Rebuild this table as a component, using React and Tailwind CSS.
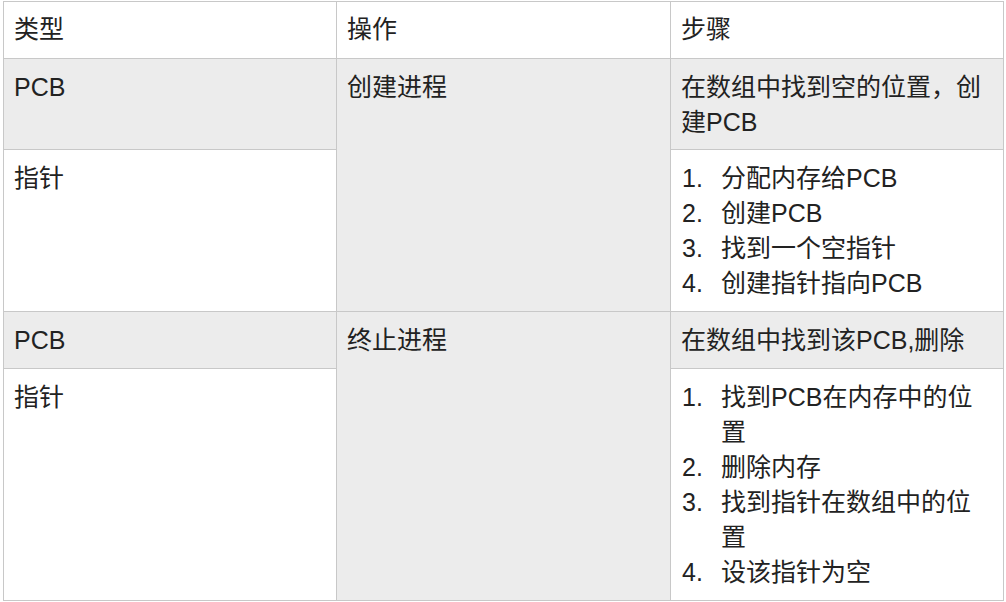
export default function App() {
  const font = { fontFamily: '"Liberation Sans", "Noto Sans CJK SC", sans-serif' };
  const cell = "px-[10px] pt-[10px] text-[25px] leading-[35px] text-[#222]";
  const Item = ({ n, children }) => (
    <div className="flex">
      <span className="w-[40px] shrink-0 pl-[1px]">{n}.</span>
      <span>{children}</span>
    </div>
  );
  return (
    <div className="w-[1006px] h-[602px] bg-white pt-[1px] pl-[3px]" style={font}>
      <div className="grid grid-cols-[332px_333px_332px] grid-rows-[56px_90px_161px_56px_231px] gap-px p-px bg-[#c8c8c8] w-[1001px]">
        <div className={`${cell} bg-white`}>类型</div>
        <div className={`${cell} bg-white`}>操作</div>
        <div className={`${cell} bg-white`}>步骤</div>

        <div className={`${cell} bg-[#ececec] pt-[11px]`}>PCB</div>
        <div className={`${cell} bg-[#ececec] pt-[11px] row-span-2`}>创建进程</div>
        <div className={`${cell} bg-[#ececec] pt-[11px]`}>
          在数组中找到空的位置，创<br />建PCB
        </div>

        <div className={`${cell} bg-white pt-[11px]`}>指针</div>
        <div className={`${cell} bg-white pt-[11px]`}>
          <Item n="1">分配内存给PCB</Item>
          <Item n="2">创建PCB</Item>
          <Item n="3">找到一个空指针</Item>
          <Item n="4">创建指针指向PCB</Item>
        </div>

        <div className={`${cell} bg-[#ececec] pt-[11px]`}>PCB</div>
        <div className={`${cell} bg-[#ececec] pt-[11px] row-span-2`}>终止进程</div>
        <div className={`${cell} bg-[#ececec] pt-[11px]`}>在数组中找到该PCB,删除</div>

        <div className={`${cell} bg-white pt-[11px]`}>指针</div>
        <div className={`${cell} bg-white pt-[11px]`}>
          <Item n="1">找到PCB在内存中的位<br />置</Item>
          <Item n="2">删除内存</Item>
          <Item n="3">找到指针在数组中的位<br />置</Item>
          <Item n="4">设该指针为空</Item>
        </div>
      </div>
    </div>
  );
}
